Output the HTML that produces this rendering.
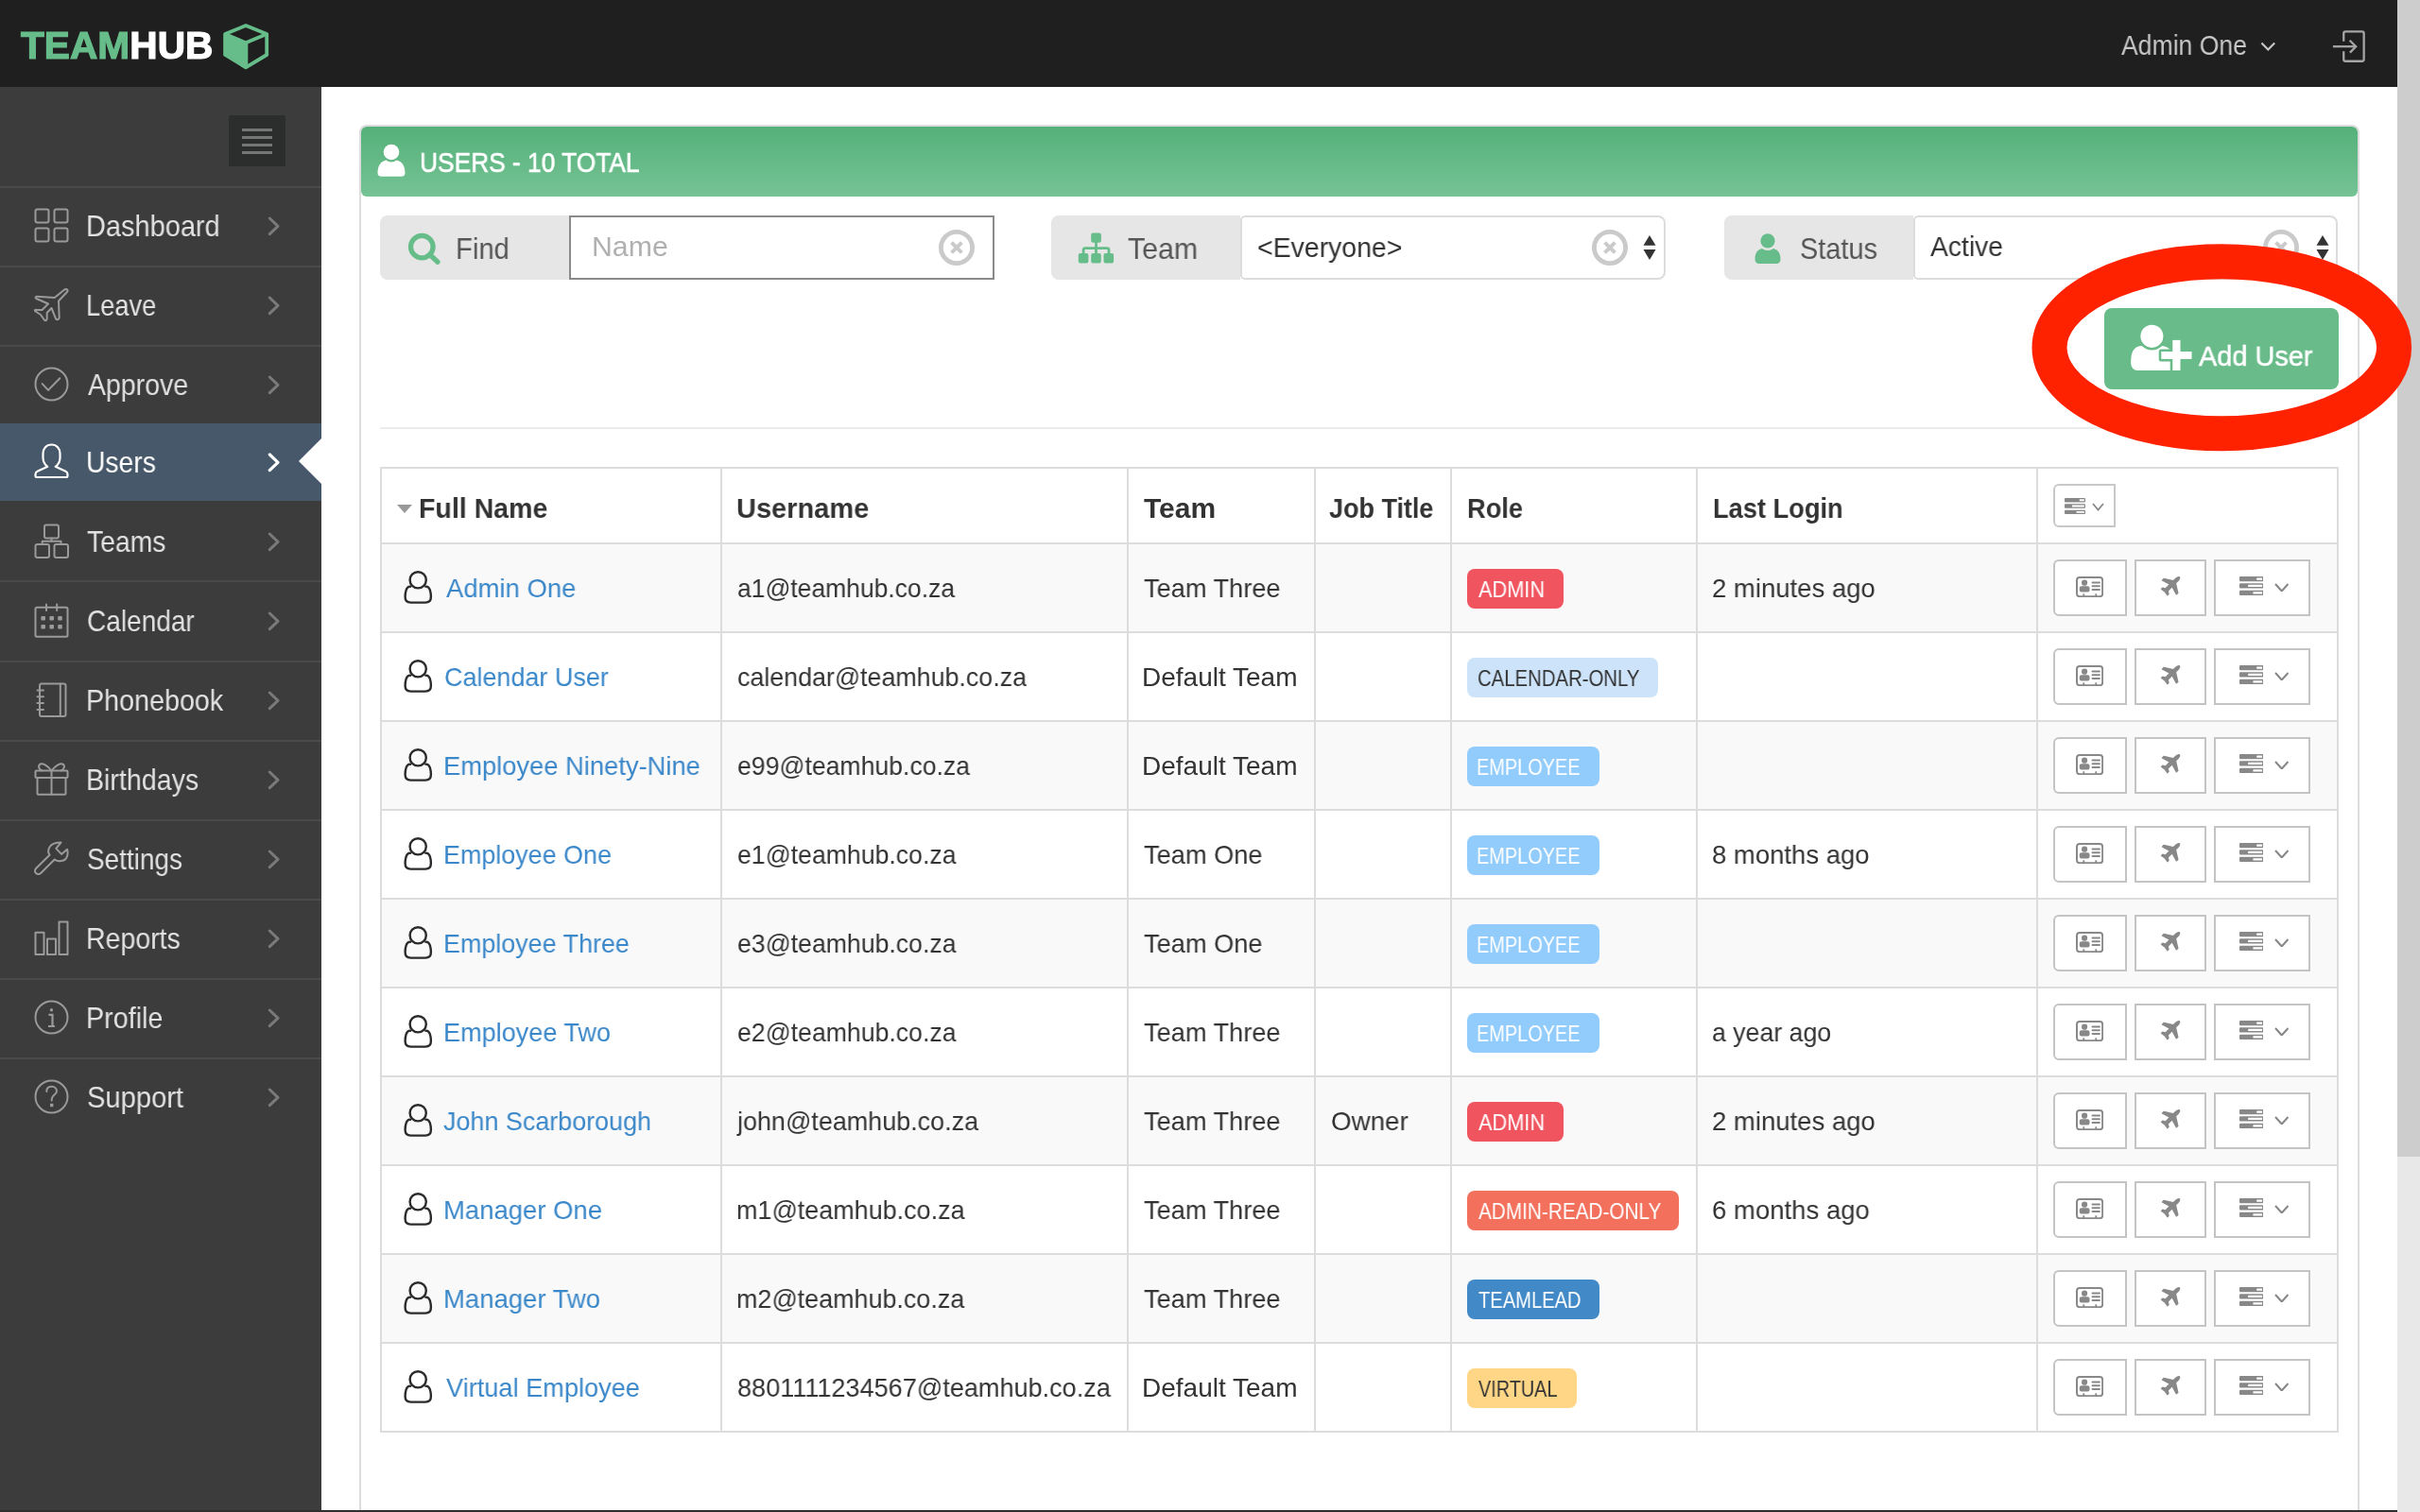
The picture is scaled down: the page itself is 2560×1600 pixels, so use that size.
<!DOCTYPE html><html><head><meta charset='utf-8'><style>
*{box-sizing:border-box;margin:0;padding:0}
html,body{width:2560px;height:1600px;overflow:hidden;background:#fff;font-family:"Liberation Sans", sans-serif;}
.a{position:absolute}
.t{position:absolute;white-space:pre;line-height:1;will-change:transform}
</style></head><body><div class="a" style="left:0;top:0;width:2536px;height:92px;background:#1f1f1f"></div>
<div class="t" style="left:22px;top:27.6px;font-size:40px;font-weight:700;color:#67bd8a;letter-spacing:0px;transform-origin:0 0;transform:scaleX(1.017);-webkit-text-stroke:1.2px #67bd8a">TEAM<span style="color:#fff;-webkit-text-stroke:1.2px #fff">HUB</span></div>
<svg style="position:absolute;left:230px;top:20px" width="60" height="58" viewBox="0 0 60 58" ><polygon points="8.1,16 30,25.3 30,51.3 8.1,38" fill="#67bd8a"/><polygon points="30,7.1 52.2,16 52.2,38 30,51.3 8.1,38 8.1,16" fill="none" stroke="#67bd8a" stroke-width="3.8" stroke-linejoin="round"/><polyline points="8.1,16 30,25.3 52.2,16" fill="none" stroke="#67bd8a" stroke-width="3.8" stroke-linejoin="round"/><line x1="30.4" y1="25.3" x2="30.4" y2="51.3" stroke="#67bd8a" stroke-width="3.8"/></svg>
<div class="t" style="left:2244.00px;top:34.45px;font-size:29px;color:#c8c8c8;font-weight:400;transform:scaleX(0.9165);transform-origin:0 0;">Admin One</div>
<svg style="position:absolute;left:2391px;top:44px" width="17" height="11" viewBox="0 0 17 11" ><polyline points="1.4,1.5 8.3,8.6 15.2,1.5" fill="none" stroke="#c8c8c8" stroke-width="2.1"/></svg>
<svg style="position:absolute;left:2466px;top:30px" width="38" height="38" viewBox="0 0 38 38" ><path d="M13.25,13.8 V5.45 a2,2 0 0 1 2,-2 H32.65 a2,2 0 0 1 2,2 V32.75 a2,2 0 0 1 -2,2 H15.25 a2,2 0 0 1 -2,-2 V24.3" fill="none" stroke="#a6a6a6" stroke-width="2.3"/><line x1="1.9" y1="19.2" x2="26" y2="19.2" stroke="#a6a6a6" stroke-width="2.3"/><polyline points="19.6,12.7 26.2,19.2 19.9,25.6" fill="none" stroke="#a6a6a6" stroke-width="2.3"/></svg>
<div class="a" style="left:2536px;top:0;width:24px;height:1600px;background:#e8e8e8"></div>
<div class="a" style="left:2536px;top:0;width:24px;height:1224px;background:#cdcdcd"></div>
<div class="a" style="left:0;top:92px;width:340px;height:1508px;background:#3c3c3c"></div>
<div class="a" style="left:242px;top:122px;width:60px;height:54px;background:#2c2d2d"></div>
<div class="a" style="left:256px;top:136px;width:32px;height:2.6px;background:#767676"></div>
<div class="a" style="left:256px;top:144px;width:32px;height:2.6px;background:#767676"></div>
<div class="a" style="left:256px;top:152px;width:32px;height:2.6px;background:#767676"></div>
<div class="a" style="left:256px;top:160px;width:32px;height:2.6px;background:#767676"></div>
<div class="a" style="left:0;top:197px;width:340px;height:2px;background:#494949"></div>
<div class="a" style="left:0;top:281px;width:340px;height:2px;background:#494949"></div>
<div class="a" style="left:0;top:365px;width:340px;height:2px;background:#494949"></div>
<div class="a" style="left:0;top:614px;width:340px;height:2px;background:#494949"></div>
<div class="a" style="left:0;top:699px;width:340px;height:2px;background:#494949"></div>
<div class="a" style="left:0;top:783px;width:340px;height:2px;background:#494949"></div>
<div class="a" style="left:0;top:867px;width:340px;height:2px;background:#494949"></div>
<div class="a" style="left:0;top:951px;width:340px;height:2px;background:#494949"></div>
<div class="a" style="left:0;top:1035px;width:340px;height:2px;background:#494949"></div>
<div class="a" style="left:0;top:1119px;width:340px;height:2px;background:#494949"></div>
<div class="a" style="left:0;top:448px;width:340px;height:82px;background:#465869"></div>
<svg style="position:absolute;left:316px;top:464px" width="24" height="48" viewBox="0 0 24 48" ><polygon points="0,24 24,0 24,48" fill="#fff"/></svg>
<svg style="position:absolute;left:36px;top:220px" width="37" height="37" viewBox="-0.5 -0.5 37 37" ><g fill="none" stroke="#9a9a9a" stroke-width="2" stroke-linejoin="round" stroke-linecap="round"><rect x="1" y="1" width="14" height="14" rx="2"/><rect x="21" y="1" width="14" height="14" rx="2"/><rect x="1" y="21" width="14" height="14" rx="2"/><rect x="21" y="21" width="14" height="14" rx="2"/></g></svg>
<div class="t" style="left:90.68px;top:224.18px;font-size:30.5px;color:#e2e2e2;font-weight:400;transform:scaleX(0.9493);transform-origin:0 0;">Dashboard</div>
<svg style="position:absolute;left:283px;top:229px" width="14" height="21" viewBox="0 0 14 21" ><polyline points="2.3,2 11,10.3 2.3,18.6" fill="none" stroke="#7a7a7a" stroke-width="3" stroke-linecap="round" stroke-linejoin="round"/></svg>
<svg style="position:absolute;left:36px;top:304px" width="37" height="37" viewBox="-0.5 -0.5 37 37" ><path fill="none" stroke="#9a9a9a" stroke-width="2" stroke-linejoin="round" stroke-linecap="round" d="M32,1.8 C34.5,0.8 36,2.8 34.2,4.8 L25.5,14 L26.2,31.5 C26.2,33 24.2,34.5 22.8,33.3 L18,21.5 L13.2,26.5 L13.2,32.8 C13.2,34.5 11.5,35.2 10.5,34.2 L6.5,28.5 L1,25 C0,24 0.6,23 1.6,23.2 L8,23.5 L14.5,17 L2,11.5 C0.6,10.8 1,9.3 2.5,9.3 L21.2,10.5 Z"/></svg>
<div class="t" style="left:90.82px;top:308.18px;font-size:30.5px;color:#e2e2e2;font-weight:400;transform:scaleX(0.8924);transform-origin:0 0;">Leave</div>
<svg style="position:absolute;left:283px;top:313px" width="14" height="21" viewBox="0 0 14 21" ><polyline points="2.3,2 11,10.3 2.3,18.6" fill="none" stroke="#7a7a7a" stroke-width="3" stroke-linecap="round" stroke-linejoin="round"/></svg>
<svg style="position:absolute;left:36px;top:388px" width="37" height="37" viewBox="-0.5 -0.5 37 37" ><g fill="none" stroke="#9a9a9a" stroke-width="2" stroke-linejoin="round" stroke-linecap="round"><circle cx="18" cy="18" r="17"/><polyline points="8.2,17.6 14.5,24.4 26.8,11.8"/></g></svg>
<div class="t" style="left:93.00px;top:392.18px;font-size:30.5px;color:#e2e2e2;font-weight:400;transform:scaleX(0.9334);transform-origin:0 0;">Approve</div>
<svg style="position:absolute;left:283px;top:397px" width="14" height="21" viewBox="0 0 14 21" ><polyline points="2.3,2 11,10.3 2.3,18.6" fill="none" stroke="#7a7a7a" stroke-width="3" stroke-linecap="round" stroke-linejoin="round"/></svg>
<svg style="position:absolute;left:36px;top:469px" width="37" height="37" viewBox="-0.5 -0.5 37 37" ><path fill="none" stroke="#fff" stroke-width="2.2" stroke-linejoin="round" d="M18,1 C12.5,1 9,5 9,10.5 L9,15 C9,19 10.8,22 13.8,24.3 L3,29.3 C1.5,30 1,31 1,32.5 L1,34 C1,35 1.6,35.6 2.6,35.6 L33.4,35.6 C34.4,35.6 35,35 35,34 L35,32.5 C35,31 34.5,30 33,29.3 L22.2,24.3 C25.2,22 27,19 27,15 L27,10.5 C27,5 23.5,1 18,1 Z"/></svg>
<div class="t" style="left:91.02px;top:474.18px;font-size:30.5px;color:#ffffff;font-weight:400;transform:scaleX(0.9269);transform-origin:0 0;">Users</div>
<svg style="position:absolute;left:283px;top:479px" width="14" height="21" viewBox="0 0 14 21" ><polyline points="2.3,2 11,10.3 2.3,18.6" fill="none" stroke="#ffffff" stroke-width="3.2" stroke-linecap="round" stroke-linejoin="round"/></svg>
<svg style="position:absolute;left:36px;top:554px" width="37" height="37" viewBox="-0.5 -0.5 37 37" ><g fill="none" stroke="#9a9a9a" stroke-width="2" stroke-linejoin="round" stroke-linecap="round"><rect x="10.5" y="1" width="15" height="14" rx="2"/><rect x="1" y="21.5" width="14.5" height="14" rx="2"/><rect x="21" y="21.5" width="14.5" height="14" rx="2"/><polyline points="8.2,21.5 8.2,18.3 28,18.3 28,21.5"/><line x1="18" y1="15" x2="18" y2="18.3"/></g></svg>
<div class="t" style="left:92.43px;top:558.18px;font-size:30.5px;color:#e2e2e2;font-weight:400;transform:scaleX(0.9286);transform-origin:0 0;">Teams</div>
<svg style="position:absolute;left:283px;top:563px" width="14" height="21" viewBox="0 0 14 21" ><polyline points="2.3,2 11,10.3 2.3,18.6" fill="none" stroke="#7a7a7a" stroke-width="3" stroke-linecap="round" stroke-linejoin="round"/></svg>
<svg style="position:absolute;left:36px;top:638px" width="37" height="37" viewBox="-0.5 -0.5 37 37" ><g fill="none" stroke="#9a9a9a" stroke-width="2" stroke-linejoin="round" stroke-linecap="round"><rect x="1" y="4.3" width="34" height="31" rx="1.5"/><line x1="12.5" y1="1" x2="12.5" y2="7.5"/><line x1="23.7" y1="1" x2="23.7" y2="7.5"/></g><rect x="6.8999999999999995" y="13.399999999999999" width="4.6" height="4.6" rx="1" fill="#9a9a9a"/><rect x="6.8999999999999995" y="22.4" width="4.6" height="4.6" rx="1" fill="#9a9a9a"/><rect x="15.899999999999999" y="13.399999999999999" width="4.6" height="4.6" rx="1" fill="#9a9a9a"/><rect x="15.899999999999999" y="22.4" width="4.6" height="4.6" rx="1" fill="#9a9a9a"/><rect x="24.7" y="13.399999999999999" width="4.6" height="4.6" rx="1" fill="#9a9a9a"/><rect x="24.7" y="22.4" width="4.6" height="4.6" rx="1" fill="#9a9a9a"/></svg>
<div class="t" style="left:91.60px;top:642.18px;font-size:30.5px;color:#e2e2e2;font-weight:400;transform:scaleX(0.9192);transform-origin:0 0;">Calendar</div>
<svg style="position:absolute;left:283px;top:647px" width="14" height="21" viewBox="0 0 14 21" ><polyline points="2.3,2 11,10.3 2.3,18.6" fill="none" stroke="#7a7a7a" stroke-width="3" stroke-linecap="round" stroke-linejoin="round"/></svg>
<svg style="position:absolute;left:36px;top:722px" width="37" height="37" viewBox="-0.5 -0.5 37 37" ><g fill="none" stroke="#9a9a9a" stroke-width="2" stroke-linejoin="round" stroke-linecap="round"><rect x="5.5" y="1" width="27.5" height="34.5" rx="2"/><line x1="27.3" y1="1" x2="27.3" y2="35.5"/><line x1="3" y1="8" x2="9.5" y2="8"/><line x1="3" y1="14.8" x2="9.5" y2="14.8"/><line x1="3" y1="21.5" x2="9.5" y2="21.5"/><line x1="3" y1="28.4" x2="9.5" y2="28.4"/></g></svg>
<div class="t" style="left:90.70px;top:726.18px;font-size:30.5px;color:#e2e2e2;font-weight:400;transform:scaleX(0.9409);transform-origin:0 0;">Phonebook</div>
<svg style="position:absolute;left:283px;top:731px" width="14" height="21" viewBox="0 0 14 21" ><polyline points="2.3,2 11,10.3 2.3,18.6" fill="none" stroke="#7a7a7a" stroke-width="3" stroke-linecap="round" stroke-linejoin="round"/></svg>
<svg style="position:absolute;left:36px;top:806px" width="37" height="37" viewBox="-0.5 -0.5 37 37" ><g fill="none" stroke="#9a9a9a" stroke-width="2" stroke-linejoin="round" stroke-linecap="round"><rect x="1" y="9" width="34" height="7.5" rx="1"/><rect x="3" y="16.5" width="30" height="17.8" rx="1"/><line x1="18" y1="9" x2="18" y2="34.3"/><path d="M18,9 C14,4 8,0 5.5,2.5 C3.5,4.5 5,8 8,9"/><path d="M18,9 C22,4 28,0 30.5,2.5 C32.5,4.5 31,8 28,9"/></g></svg>
<div class="t" style="left:90.71px;top:810.18px;font-size:30.5px;color:#e2e2e2;font-weight:400;transform:scaleX(0.9371);transform-origin:0 0;">Birthdays</div>
<svg style="position:absolute;left:283px;top:815px" width="14" height="21" viewBox="0 0 14 21" ><polyline points="2.3,2 11,10.3 2.3,18.6" fill="none" stroke="#7a7a7a" stroke-width="3" stroke-linecap="round" stroke-linejoin="round"/></svg>
<svg style="position:absolute;left:36px;top:890px" width="37" height="37" viewBox="-0.5 -0.5 37 37" ><path fill="none" stroke="#9a9a9a" stroke-width="2" stroke-linejoin="round" stroke-linecap="round" d="M16,14.2 C14.4,12 14.4,8.3 16.2,5.5 C18.2,2.5 22.5,1 28,1 L22.8,7.4 L28.6,13.4 L34.5,8.2 C35.2,10.2 35.2,13 34.7,15 C33.9,18.2 31.5,20.2 28.3,20.6 C25.8,21 23,20.5 21.2,19 L6.9,33.2 C5.2,34.9 2.9,34.9 1.5,33.5 C0.1,32.1 0.1,29.9 1.8,28.2 Z"/></svg>
<div class="t" style="left:91.88px;top:894.18px;font-size:30.5px;color:#e2e2e2;font-weight:400;transform:scaleX(0.9161);transform-origin:0 0;">Settings</div>
<svg style="position:absolute;left:283px;top:899px" width="14" height="21" viewBox="0 0 14 21" ><polyline points="2.3,2 11,10.3 2.3,18.6" fill="none" stroke="#7a7a7a" stroke-width="3" stroke-linecap="round" stroke-linejoin="round"/></svg>
<svg style="position:absolute;left:36px;top:974px" width="37" height="37" viewBox="-0.5 -0.5 37 37" ><g fill="none" stroke="#9a9a9a" stroke-width="2" stroke-linejoin="round" stroke-linecap="round"><rect x="1" y="12.3" width="9" height="23.3"/><rect x="13.5" y="19" width="9" height="16.6"/><rect x="26" y="1" width="9" height="34.6"/></g></svg>
<div class="t" style="left:90.72px;top:978.18px;font-size:30.5px;color:#e2e2e2;font-weight:400;transform:scaleX(0.9348);transform-origin:0 0;">Reports</div>
<svg style="position:absolute;left:283px;top:983px" width="14" height="21" viewBox="0 0 14 21" ><polyline points="2.3,2 11,10.3 2.3,18.6" fill="none" stroke="#7a7a7a" stroke-width="3" stroke-linecap="round" stroke-linejoin="round"/></svg>
<svg style="position:absolute;left:36px;top:1058px" width="37" height="37" viewBox="-0.5 -0.5 37 37" ><g fill="none" stroke="#9a9a9a" stroke-width="2" stroke-linejoin="round" stroke-linecap="round"><circle cx="18" cy="18" r="17"/></g><circle cx="18" cy="10.3" r="1.7" fill="#9a9a9a"/><path d="M15,15.3 H19 V27.3 M14.5,27.5 H21.5" fill="none" stroke="#9a9a9a" stroke-width="2.2"/></svg>
<div class="t" style="left:90.70px;top:1062.18px;font-size:30.5px;color:#e2e2e2;font-weight:400;transform:scaleX(0.9408);transform-origin:0 0;">Profile</div>
<svg style="position:absolute;left:283px;top:1067px" width="14" height="21" viewBox="0 0 14 21" ><polyline points="2.3,2 11,10.3 2.3,18.6" fill="none" stroke="#7a7a7a" stroke-width="3" stroke-linecap="round" stroke-linejoin="round"/></svg>
<svg style="position:absolute;left:36px;top:1142px" width="37" height="37" viewBox="-0.5 -0.5 37 37" ><g fill="none" stroke="#9a9a9a" stroke-width="2" stroke-linejoin="round" stroke-linecap="round"><circle cx="18" cy="18" r="17"/><path d="M12.8,12.5 C12.8,9 15.2,7.3 18.2,7.3 C21.3,7.3 23.5,9.3 23.5,12.2 C23.5,15.8 18.2,16.5 18.2,20.5 L18.2,22"/></g><rect x="16.5" y="25.3" width="3.4" height="3.4" fill="#9a9a9a"/></svg>
<div class="t" style="left:91.83px;top:1146.18px;font-size:30.5px;color:#e2e2e2;font-weight:400;transform:scaleX(0.9558);transform-origin:0 0;">Support</div>
<svg style="position:absolute;left:283px;top:1151px" width="14" height="21" viewBox="0 0 14 21" ><polyline points="2.3,2 11,10.3 2.3,18.6" fill="none" stroke="#7a7a7a" stroke-width="3" stroke-linecap="round" stroke-linejoin="round"/></svg>
<div class="a" style="left:380px;top:132px;width:2116px;height:1500px;border:2px solid #dcdcdc;border-radius:8px 8px 0 0;background:#fff"></div>
<div class="a" style="left:382px;top:134px;width:2112px;height:74px;border-radius:6px;background:linear-gradient(#54b179,#76c395)"></div>
<svg style="position:absolute;left:399px;top:152px" width="30" height="36" viewBox="0 0 30 36" ><circle cx="15" cy="9" r="8.3" fill="#fff"/><path d="M0.5,31 C0.5,22 5,18.5 9.5,17.5 C11,18.8 13,19.5 15,19.5 C17,19.5 19,18.8 20.5,17.5 C25,18.5 29.5,22 29.5,31 C29.5,33.5 28,34.8 25.5,34.8 L4.5,34.8 C2,34.8 0.5,33.5 0.5,31 Z" fill="#fff"/></svg>
<div class="t" style="left:444.46px;top:157.32px;font-size:29.5px;color:#fff;font-weight:400;transform:scaleX(0.8921);transform-origin:0 0;-webkit-text-stroke:0.6px #fff">USERS - 10 TOTAL</div>
<div class="a" style="left:402px;top:228px;width:200px;height:68px;background:#e6e6e6;border-radius:8px 0 0 8px"></div>
<div class="a" style="left:1112px;top:228px;width:200px;height:68px;background:#e6e6e6;border-radius:8px 0 0 8px"></div>
<div class="a" style="left:1824px;top:228px;width:200px;height:68px;background:#e6e6e6;border-radius:8px 0 0 8px"></div>
<div class="a" style="left:602px;top:228px;width:450px;height:68px;border:2px solid #8a8a8a;background:#fff"></div>
<div class="a" style="left:1312px;top:228px;width:450px;height:68px;border:2px solid #dcdcdc;border-radius:5px 8px 8px 5px;background:#fff"></div>
<div class="a" style="left:2024px;top:228px;width:449px;height:68px;border:2px solid #dcdcdc;border-radius:5px 8px 8px 5px;background:#fff"></div>
<svg style="position:absolute;left:430px;top:245px" width="40" height="40" viewBox="0 0 40 40" ><circle cx="16.3" cy="16.1" r="11.8" fill="none" stroke="#67bd8a" stroke-width="5.3"/><line x1="24.5" y1="24.3" x2="33" y2="32.2" stroke="#67bd8a" stroke-width="5.3" stroke-linecap="round"/></svg>
<div class="t" style="left:482.36px;top:248.18px;font-size:30.5px;color:#555;font-weight:400;transform:scaleX(0.9587);transform-origin:0 0;">Find</div>
<div class="t" style="left:626.38px;top:247.45px;font-size:29px;color:#b0b0b0;font-weight:400;transform:scaleX(1.0434);transform-origin:0 0;">Name</div>
<svg style="position:absolute;left:992px;top:242px" width="40" height="40" viewBox="0 0 40 40" ><circle cx="20" cy="20" r="16.6" fill="none" stroke="#cacaca" stroke-width="4.8"/><path d="M14.6,14.6 L25.4,25.4 M25.4,14.6 L14.6,25.4" stroke="#cacaca" stroke-width="4" stroke-linecap="butt"/></svg>
<svg style="position:absolute;left:1140px;top:246px" width="40" height="34" viewBox="0 0 40 34" ><rect x="14.2" y="0.6" width="10.7" height="10.2" rx="2" fill="#67bd8a"/><rect x="0.8" y="22" width="10.6" height="10.6" rx="2" fill="#67bd8a"/><rect x="14.2" y="22" width="10.6" height="10.6" rx="2" fill="#67bd8a"/><rect x="27.5" y="22" width="10.6" height="10.6" rx="2" fill="#67bd8a"/><path d="M19.5,10 V22.5 M6.1,22.5 V18.6 Q6.1,16.6 8.1,16.6 H31 Q33,16.6 33,18.6 V22.5" fill="none" stroke="#67bd8a" stroke-width="2.8"/></svg>
<div class="t" style="left:1193.39px;top:248.18px;font-size:30.5px;color:#555;font-weight:400;transform:scaleX(0.9924);transform-origin:0 0;">Team</div>
<div class="t" style="left:1330.26px;top:247.65px;font-size:29px;color:#333;font-weight:400;transform:scaleX(0.9808);transform-origin:0 0;">&lt;Everyone&gt;</div>
<svg style="position:absolute;left:1683px;top:242px" width="40" height="40" viewBox="0 0 40 40" ><circle cx="20" cy="20" r="16.6" fill="none" stroke="#cacaca" stroke-width="4.8"/><path d="M14.6,14.6 L25.4,25.4 M25.4,14.6 L14.6,25.4" stroke="#cacaca" stroke-width="4" stroke-linecap="butt"/></svg>
<svg style="position:absolute;left:1737px;top:249px" width="16" height="27" viewBox="0 0 16 27" ><polygon points="8,0 14.5,10.7 1.5,10.7" fill="#333"/><polygon points="1.5,14.9 14.5,14.9 8,26" fill="#333"/></svg>
<svg style="position:absolute;left:1856px;top:247px" width="29" height="33" viewBox="0 0 29 33" ><circle cx="14" cy="7.8" r="7.6" fill="#67bd8a"/><path d="M0.5,27 C0.5,20 4,17 8,16 C9.5,17.2 11.5,18 14,18 C16.5,18 18.5,17.2 20,16 C24,17 27.5,20 27.5,27 C27.5,30.3 26,32 23,32 L5,32 C2,32 0.5,30.3 0.5,27 Z" fill="#67bd8a"/></svg>
<div class="t" style="left:1903.84px;top:248.18px;font-size:30.5px;color:#555;font-weight:400;transform:scaleX(0.9486);transform-origin:0 0;">Status</div>
<div class="t" style="left:2041.80px;top:247.45px;font-size:29px;color:#333;font-weight:400;transform:scaleX(0.9753);transform-origin:0 0;">Active</div>
<svg style="position:absolute;left:2393px;top:242px" width="40" height="40" viewBox="0 0 40 40" ><circle cx="20" cy="20" r="16.6" fill="none" stroke="#cacaca" stroke-width="4.8"/><path d="M14.6,14.6 L25.4,25.4 M25.4,14.6 L14.6,25.4" stroke="#cacaca" stroke-width="4" stroke-linecap="butt"/></svg>
<svg style="position:absolute;left:2449px;top:249px" width="16" height="27" viewBox="0 0 16 27" ><polygon points="8,0 14.5,10.7 1.5,10.7" fill="#333"/><polygon points="1.5,14.9 14.5,14.9 8,26" fill="#333"/></svg>
<div class="a" style="left:2226px;top:326px;width:248px;height:86px;background:#69bc8a;border-radius:8px"></div>
<svg style="position:absolute;left:2245px;top:335px" width="80" height="65" viewBox="0 0 80 65" ><path d="M9.2,47 C9.2,37 13,31 21,31 L40,31 C47,31 52,34 52,40 L52,57 L16.5,57 C12,57 9.2,53.5 9.2,49 Z" fill="#fff"/><circle cx="31.4" cy="20.85" r="14.6" fill="#69bc8a"/><circle cx="31.4" cy="20.85" r="12.05" fill="#fff"/><rect x="50.7" y="22.3" width="13.4" height="40" rx="2.6" fill="#69bc8a"/><rect x="38.7" y="34.4" width="37.4" height="13.1" rx="2.6" fill="#69bc8a"/><rect x="53.3" y="24.9" width="8.2" height="32.1" fill="#fff"/><rect x="41.3" y="37" width="32.2" height="7.9" fill="#fff"/></svg>
<div class="t" style="left:2325.70px;top:362.10px;font-size:30px;color:#fff;font-weight:400;transform:scaleX(0.9626);transform-origin:0 0;-webkit-text-stroke:0.5px #fff">Add User</div>
<div class="a" style="left:402px;top:452px;width:2071px;height:2px;background:#ececec"></div>
<div class="a" style="left:402px;top:574px;width:2070px;height:94px;background:#f9f9f9"></div>
<div class="a" style="left:402px;top:762px;width:2070px;height:94px;background:#f9f9f9"></div>
<div class="a" style="left:402px;top:950px;width:2070px;height:94px;background:#f9f9f9"></div>
<div class="a" style="left:402px;top:1138px;width:2070px;height:94px;background:#f9f9f9"></div>
<div class="a" style="left:402px;top:1326px;width:2070px;height:94px;background:#f9f9f9"></div>
<div class="a" style="left:402px;top:494px;width:2072px;height:2px;background:#dcdcdc"></div>
<div class="a" style="left:402px;top:574px;width:2072px;height:2px;background:#dcdcdc"></div>
<div class="a" style="left:402px;top:668px;width:2072px;height:2px;background:#dcdcdc"></div>
<div class="a" style="left:402px;top:762px;width:2072px;height:2px;background:#dcdcdc"></div>
<div class="a" style="left:402px;top:856px;width:2072px;height:2px;background:#dcdcdc"></div>
<div class="a" style="left:402px;top:950px;width:2072px;height:2px;background:#dcdcdc"></div>
<div class="a" style="left:402px;top:1044px;width:2072px;height:2px;background:#dcdcdc"></div>
<div class="a" style="left:402px;top:1138px;width:2072px;height:2px;background:#dcdcdc"></div>
<div class="a" style="left:402px;top:1232px;width:2072px;height:2px;background:#dcdcdc"></div>
<div class="a" style="left:402px;top:1326px;width:2072px;height:2px;background:#dcdcdc"></div>
<div class="a" style="left:402px;top:1420px;width:2072px;height:2px;background:#dcdcdc"></div>
<div class="a" style="left:402px;top:1514px;width:2072px;height:2px;background:#dcdcdc"></div>
<div class="a" style="left:402px;top:494px;width:2px;height:1022px;background:#dcdcdc"></div>
<div class="a" style="left:762px;top:494px;width:2px;height:1022px;background:#dcdcdc"></div>
<div class="a" style="left:1192px;top:494px;width:2px;height:1022px;background:#dcdcdc"></div>
<div class="a" style="left:1390px;top:494px;width:2px;height:1022px;background:#dcdcdc"></div>
<div class="a" style="left:1534px;top:494px;width:2px;height:1022px;background:#dcdcdc"></div>
<div class="a" style="left:1794px;top:494px;width:2px;height:1022px;background:#dcdcdc"></div>
<div class="a" style="left:2154px;top:494px;width:2px;height:1022px;background:#dcdcdc"></div>
<div class="a" style="left:2472px;top:494px;width:2px;height:1022px;background:#dcdcdc"></div>
<svg style="position:absolute;left:419px;top:533px" width="18" height="11" viewBox="0 0 18 11" ><polygon points="1,1 17,1 9,10" fill="#999"/></svg>
<div class="t" style="left:443.19px;top:523.00px;font-size:30px;color:#333;font-weight:700;transform:scaleX(0.9504);transform-origin:0 0;">Full Name</div>
<div class="t" style="left:779.06px;top:523.00px;font-size:30px;color:#333;font-weight:700;transform:scaleX(0.9664);transform-origin:0 0;">Username</div>
<div class="t" style="left:1209.70px;top:523.00px;font-size:30px;color:#333;font-weight:700;transform:scaleX(0.9950);transform-origin:0 0;">Team</div>
<div class="t" style="left:1406.33px;top:523.00px;font-size:30px;color:#333;font-weight:700;transform:scaleX(0.8988);transform-origin:0 0;">Job Title</div>
<div class="t" style="left:1551.67px;top:523.00px;font-size:30px;color:#333;font-weight:700;transform:scaleX(0.9083);transform-origin:0 0;">Role</div>
<div class="t" style="left:1811.57px;top:523.00px;font-size:30px;color:#333;font-weight:700;transform:scaleX(0.9079);transform-origin:0 0;">Last Login</div>
<div class="a" style="left:2172px;top:512px;width:66px;height:46px;border:2px solid #c8c8c8;border-radius:6px 0 0 6px;background:#fff"></div>
<svg style="position:absolute;left:2184px;top:526.8px" width="22" height="17.1" viewBox="0 0 22 17.1" ><rect x="0" y="0.00" width="22" height="4.47" rx="1" fill="#888"/><rect x="15.76" y="1.30" width="5.11" height="1.88" rx="0.5" fill="#fff"/><rect x="0" y="6.32" width="22" height="4.47" rx="1" fill="#888"/><rect x="7.88" y="7.61" width="12.99" height="1.88" rx="0.5" fill="#fff"/><rect x="0" y="12.63" width="22" height="4.47" rx="1" fill="#888"/><rect x="12.47" y="13.93" width="8.40" height="1.88" rx="0.5" fill="#fff"/></svg>
<svg style="position:absolute;left:2213.2px;top:532.4px" width="13" height="8.6" viewBox="0 0 13 8.6" ><polyline points="1,1 6.5,7.6 12,1" fill="none" stroke="#888" stroke-width="1.8"/></svg>
<svg style="position:absolute;left:420px;top:600px" width="45" height="45" viewBox="0 0 45 45" ><g fill="none" stroke="#2b2b2b" stroke-width="2.4"><circle cx="22.2" cy="13.8" r="8.6"/><path d="M15.2,20.8 C12.5,20.2 10.5,21.5 9.6,24.5 C9,26.5 8.6,29 8.6,31.5 C8.6,35.5 10.6,37.6 14.5,37.6 L30,37.6 C33.9,37.6 35.9,35.5 35.9,31.5 C35.9,29 35.5,26.5 34.9,24.5 C34,21.5 32,20.2 29.3,20.8"/></g></svg>
<div class="t" style="left:471.50px;top:608.59px;font-size:28px;color:#3a87c9;font-weight:400;transform:scaleX(0.9802);transform-origin:0 0;">Admin One</div>
<div class="t" style="left:779.74px;top:608.59px;font-size:28px;color:#333;font-weight:400;transform:scaleX(0.9454);transform-origin:0 0;">a1@teamhub.co.za</div>
<div class="t" style="left:1209.96px;top:608.59px;font-size:28px;color:#333;font-weight:400;transform:scaleX(0.9708);transform-origin:0 0;">Team Three</div>
<div class="a" style="left:1552px;top:602px;width:102px;height:42px;background:#f0545f;border-radius:8px"></div>
<div class="t" style="left:1564.00px;top:612.53px;font-size:23px;color:#fff;font-weight:400;transform:scaleX(0.9469);transform-origin:0 0;">ADMIN</div>
<div class="t" style="left:1810.92px;top:608.59px;font-size:28px;color:#333;font-weight:400;transform:scaleX(0.9823);transform-origin:0 0;">2 minutes ago</div>
<div class="a" style="left:2172px;top:592px;width:78px;height:60px;border:2px solid #c4c4c4;border-radius:6px 0 0 6px;background:#fff"></div>
<div class="a" style="left:2258px;top:592px;width:76px;height:60px;border:2px solid #c4c4c4;background:#fff"></div>
<div class="a" style="left:2342px;top:592px;width:102px;height:60px;border:2px solid #c4c4c4;background:#fff"></div>
<svg style="position:absolute;left:2195.9px;top:609.5px" width="29.2" height="22.2" viewBox="0 0 29.2 22.2" ><rect x="1" y="1" width="27.2" height="20.2" rx="3" fill="none" stroke="#888" stroke-width="2"/><circle cx="9.1" cy="6.7" r="3.1" fill="#888"/><rect x="3.8" y="10.2" width="10.7" height="6.2" rx="2" fill="#888"/><rect x="16.5" y="5.5" width="9.4" height="2" rx="1" fill="#888"/><rect x="16.5" y="9.2" width="9.4" height="2" rx="1" fill="#888"/><rect x="16.5" y="12.9" width="9.4" height="2" rx="1" fill="#888"/><rect x="7.4" y="18.3" width="1.8" height="3" fill="#888"/><rect x="20.4" y="18.3" width="1.8" height="3" fill="#888"/></svg>
<svg style="position:absolute;left:2283.05px;top:607.54px" width="26.2" height="26.2" viewBox="0 0 1792 1792" ><path fill="#888" d="M1568 160q44 52 12 148t-108 172l-161 161 160 696q5 19-12 33l-128 96q-7 6-19 6-4 0-7-1-15-3-21-16l-279-508-259 259 53 194q5 17-8 31l-96 96q-9 9-23 9h-2q-15-2-24-13l-189-252-252-189q-11-7-13-23-1-13 9-25l96-97q9-9 23-9 6 0 8 1l194 53 259-259-508-279q-14-8-17-24-2-16 9-27l128-128q14-13 30-8l665 159 160-160q76-76 172-108t148 12z"/></svg>
<svg style="position:absolute;left:2368.7px;top:609.7px" width="25.4" height="19.9" viewBox="0 0 25.4 19.9" ><rect x="0" y="0.00" width="25.4" height="5.20" rx="1" fill="#888"/><rect x="18.20" y="1.51" width="5.90" height="2.18" rx="0.5" fill="#fff"/><rect x="0" y="7.35" width="25.4" height="5.20" rx="1" fill="#888"/><rect x="9.10" y="8.86" width="15.00" height="2.18" rx="0.5" fill="#fff"/><rect x="0" y="14.70" width="25.4" height="5.20" rx="1" fill="#888"/><rect x="14.40" y="16.21" width="9.70" height="2.18" rx="0.5" fill="#fff"/></svg>
<svg style="position:absolute;left:2405.5px;top:616.5px" width="15.5" height="9.5" viewBox="0 0 15.5 9.5" ><polyline points="1,1 7.75,8.5 14.5,1" fill="none" stroke="#888" stroke-width="2.1"/></svg>
<svg style="position:absolute;left:420px;top:694px" width="45" height="45" viewBox="0 0 45 45" ><g fill="none" stroke="#2b2b2b" stroke-width="2.4"><circle cx="22.2" cy="13.8" r="8.6"/><path d="M15.2,20.8 C12.5,20.2 10.5,21.5 9.6,24.5 C9,26.5 8.6,29 8.6,31.5 C8.6,35.5 10.6,37.6 14.5,37.6 L30,37.6 C33.9,37.6 35.9,35.5 35.9,31.5 C35.9,29 35.5,26.5 34.9,24.5 C34,21.5 32,20.2 29.3,20.8"/></g></svg>
<div class="t" style="left:470.15px;top:702.59px;font-size:28px;color:#3a87c9;font-weight:400;transform:scaleX(0.9622);transform-origin:0 0;">Calendar User</div>
<div class="t" style="left:779.73px;top:702.59px;font-size:28px;color:#333;font-weight:400;transform:scaleX(0.9577);transform-origin:0 0;">calendar@teamhub.co.za</div>
<div class="t" style="left:1208.26px;top:702.59px;font-size:28px;color:#333;font-weight:400;">Default Team</div>
<div class="a" style="left:1552px;top:696px;width:202px;height:42px;background:#cce3fa;border-radius:8px"></div>
<div class="t" style="left:1562.98px;top:706.53px;font-size:23px;color:#333;font-weight:400;transform:scaleX(0.8840);transform-origin:0 0;">CALENDAR-ONLY</div>
<div class="a" style="left:2172px;top:686px;width:78px;height:60px;border:2px solid #c4c4c4;border-radius:6px 0 0 6px;background:#fff"></div>
<div class="a" style="left:2258px;top:686px;width:76px;height:60px;border:2px solid #c4c4c4;background:#fff"></div>
<div class="a" style="left:2342px;top:686px;width:102px;height:60px;border:2px solid #c4c4c4;background:#fff"></div>
<svg style="position:absolute;left:2195.9px;top:703.5px" width="29.2" height="22.2" viewBox="0 0 29.2 22.2" ><rect x="1" y="1" width="27.2" height="20.2" rx="3" fill="none" stroke="#888" stroke-width="2"/><circle cx="9.1" cy="6.7" r="3.1" fill="#888"/><rect x="3.8" y="10.2" width="10.7" height="6.2" rx="2" fill="#888"/><rect x="16.5" y="5.5" width="9.4" height="2" rx="1" fill="#888"/><rect x="16.5" y="9.2" width="9.4" height="2" rx="1" fill="#888"/><rect x="16.5" y="12.9" width="9.4" height="2" rx="1" fill="#888"/><rect x="7.4" y="18.3" width="1.8" height="3" fill="#888"/><rect x="20.4" y="18.3" width="1.8" height="3" fill="#888"/></svg>
<svg style="position:absolute;left:2283.05px;top:701.54px" width="26.2" height="26.2" viewBox="0 0 1792 1792" ><path fill="#888" d="M1568 160q44 52 12 148t-108 172l-161 161 160 696q5 19-12 33l-128 96q-7 6-19 6-4 0-7-1-15-3-21-16l-279-508-259 259 53 194q5 17-8 31l-96 96q-9 9-23 9h-2q-15-2-24-13l-189-252-252-189q-11-7-13-23-1-13 9-25l96-97q9-9 23-9 6 0 8 1l194 53 259-259-508-279q-14-8-17-24-2-16 9-27l128-128q14-13 30-8l665 159 160-160q76-76 172-108t148 12z"/></svg>
<svg style="position:absolute;left:2368.7px;top:703.7px" width="25.4" height="19.9" viewBox="0 0 25.4 19.9" ><rect x="0" y="0.00" width="25.4" height="5.20" rx="1" fill="#888"/><rect x="18.20" y="1.51" width="5.90" height="2.18" rx="0.5" fill="#fff"/><rect x="0" y="7.35" width="25.4" height="5.20" rx="1" fill="#888"/><rect x="9.10" y="8.86" width="15.00" height="2.18" rx="0.5" fill="#fff"/><rect x="0" y="14.70" width="25.4" height="5.20" rx="1" fill="#888"/><rect x="14.40" y="16.21" width="9.70" height="2.18" rx="0.5" fill="#fff"/></svg>
<svg style="position:absolute;left:2405.5px;top:710.5px" width="15.5" height="9.5" viewBox="0 0 15.5 9.5" ><polyline points="1,1 7.75,8.5 14.5,1" fill="none" stroke="#888" stroke-width="2.1"/></svg>
<svg style="position:absolute;left:420px;top:788px" width="45" height="45" viewBox="0 0 45 45" ><g fill="none" stroke="#2b2b2b" stroke-width="2.4"><circle cx="22.2" cy="13.8" r="8.6"/><path d="M15.2,20.8 C12.5,20.2 10.5,21.5 9.6,24.5 C9,26.5 8.6,29 8.6,31.5 C8.6,35.5 10.6,37.6 14.5,37.6 L30,37.6 C33.9,37.6 35.9,35.5 35.9,31.5 C35.9,29 35.5,26.5 34.9,24.5 C34,21.5 32,20.2 29.3,20.8"/></g></svg>
<div class="t" style="left:469.31px;top:796.59px;font-size:28px;color:#3a87c9;font-weight:400;transform:scaleX(0.9756);transform-origin:0 0;">Employee Ninety-Nine</div>
<div class="t" style="left:779.74px;top:796.59px;font-size:28px;color:#333;font-weight:400;transform:scaleX(0.9504);transform-origin:0 0;">e99@teamhub.co.za</div>
<div class="t" style="left:1208.26px;top:796.59px;font-size:28px;color:#333;font-weight:400;">Default Team</div>
<div class="a" style="left:1552px;top:790px;width:140px;height:42px;background:#92ccfc;border-radius:8px"></div>
<div class="t" style="left:1562.41px;top:800.53px;font-size:23px;color:#fff;font-weight:400;transform:scaleX(0.8655);transform-origin:0 0;">EMPLOYEE</div>
<div class="a" style="left:2172px;top:780px;width:78px;height:60px;border:2px solid #c4c4c4;border-radius:6px 0 0 6px;background:#fff"></div>
<div class="a" style="left:2258px;top:780px;width:76px;height:60px;border:2px solid #c4c4c4;background:#fff"></div>
<div class="a" style="left:2342px;top:780px;width:102px;height:60px;border:2px solid #c4c4c4;background:#fff"></div>
<svg style="position:absolute;left:2195.9px;top:797.5px" width="29.2" height="22.2" viewBox="0 0 29.2 22.2" ><rect x="1" y="1" width="27.2" height="20.2" rx="3" fill="none" stroke="#888" stroke-width="2"/><circle cx="9.1" cy="6.7" r="3.1" fill="#888"/><rect x="3.8" y="10.2" width="10.7" height="6.2" rx="2" fill="#888"/><rect x="16.5" y="5.5" width="9.4" height="2" rx="1" fill="#888"/><rect x="16.5" y="9.2" width="9.4" height="2" rx="1" fill="#888"/><rect x="16.5" y="12.9" width="9.4" height="2" rx="1" fill="#888"/><rect x="7.4" y="18.3" width="1.8" height="3" fill="#888"/><rect x="20.4" y="18.3" width="1.8" height="3" fill="#888"/></svg>
<svg style="position:absolute;left:2283.05px;top:795.54px" width="26.2" height="26.2" viewBox="0 0 1792 1792" ><path fill="#888" d="M1568 160q44 52 12 148t-108 172l-161 161 160 696q5 19-12 33l-128 96q-7 6-19 6-4 0-7-1-15-3-21-16l-279-508-259 259 53 194q5 17-8 31l-96 96q-9 9-23 9h-2q-15-2-24-13l-189-252-252-189q-11-7-13-23-1-13 9-25l96-97q9-9 23-9 6 0 8 1l194 53 259-259-508-279q-14-8-17-24-2-16 9-27l128-128q14-13 30-8l665 159 160-160q76-76 172-108t148 12z"/></svg>
<svg style="position:absolute;left:2368.7px;top:797.7px" width="25.4" height="19.9" viewBox="0 0 25.4 19.9" ><rect x="0" y="0.00" width="25.4" height="5.20" rx="1" fill="#888"/><rect x="18.20" y="1.51" width="5.90" height="2.18" rx="0.5" fill="#fff"/><rect x="0" y="7.35" width="25.4" height="5.20" rx="1" fill="#888"/><rect x="9.10" y="8.86" width="15.00" height="2.18" rx="0.5" fill="#fff"/><rect x="0" y="14.70" width="25.4" height="5.20" rx="1" fill="#888"/><rect x="14.40" y="16.21" width="9.70" height="2.18" rx="0.5" fill="#fff"/></svg>
<svg style="position:absolute;left:2405.5px;top:804.5px" width="15.5" height="9.5" viewBox="0 0 15.5 9.5" ><polyline points="1,1 7.75,8.5 14.5,1" fill="none" stroke="#888" stroke-width="2.1"/></svg>
<svg style="position:absolute;left:420px;top:882px" width="45" height="45" viewBox="0 0 45 45" ><g fill="none" stroke="#2b2b2b" stroke-width="2.4"><circle cx="22.2" cy="13.8" r="8.6"/><path d="M15.2,20.8 C12.5,20.2 10.5,21.5 9.6,24.5 C9,26.5 8.6,29 8.6,31.5 C8.6,35.5 10.6,37.6 14.5,37.6 L30,37.6 C33.9,37.6 35.9,35.5 35.9,31.5 C35.9,29 35.5,26.5 34.9,24.5 C34,21.5 32,20.2 29.3,20.8"/></g></svg>
<div class="t" style="left:469.35px;top:890.59px;font-size:28px;color:#3a87c9;font-weight:400;transform:scaleX(0.9606);transform-origin:0 0;">Employee One</div>
<div class="t" style="left:779.73px;top:890.59px;font-size:28px;color:#333;font-weight:400;transform:scaleX(0.9516);transform-origin:0 0;">e1@teamhub.co.za</div>
<div class="t" style="left:1209.96px;top:890.59px;font-size:28px;color:#333;font-weight:400;transform:scaleX(0.9718);transform-origin:0 0;">Team One</div>
<div class="a" style="left:1552px;top:884px;width:140px;height:42px;background:#92ccfc;border-radius:8px"></div>
<div class="t" style="left:1562.41px;top:894.53px;font-size:23px;color:#fff;font-weight:400;transform:scaleX(0.8655);transform-origin:0 0;">EMPLOYEE</div>
<div class="t" style="left:1811.20px;top:890.59px;font-size:28px;color:#333;font-weight:400;transform:scaleX(0.9819);transform-origin:0 0;">8 months ago</div>
<div class="a" style="left:2172px;top:874px;width:78px;height:60px;border:2px solid #c4c4c4;border-radius:6px 0 0 6px;background:#fff"></div>
<div class="a" style="left:2258px;top:874px;width:76px;height:60px;border:2px solid #c4c4c4;background:#fff"></div>
<div class="a" style="left:2342px;top:874px;width:102px;height:60px;border:2px solid #c4c4c4;background:#fff"></div>
<svg style="position:absolute;left:2195.9px;top:891.5px" width="29.2" height="22.2" viewBox="0 0 29.2 22.2" ><rect x="1" y="1" width="27.2" height="20.2" rx="3" fill="none" stroke="#888" stroke-width="2"/><circle cx="9.1" cy="6.7" r="3.1" fill="#888"/><rect x="3.8" y="10.2" width="10.7" height="6.2" rx="2" fill="#888"/><rect x="16.5" y="5.5" width="9.4" height="2" rx="1" fill="#888"/><rect x="16.5" y="9.2" width="9.4" height="2" rx="1" fill="#888"/><rect x="16.5" y="12.9" width="9.4" height="2" rx="1" fill="#888"/><rect x="7.4" y="18.3" width="1.8" height="3" fill="#888"/><rect x="20.4" y="18.3" width="1.8" height="3" fill="#888"/></svg>
<svg style="position:absolute;left:2283.05px;top:889.54px" width="26.2" height="26.2" viewBox="0 0 1792 1792" ><path fill="#888" d="M1568 160q44 52 12 148t-108 172l-161 161 160 696q5 19-12 33l-128 96q-7 6-19 6-4 0-7-1-15-3-21-16l-279-508-259 259 53 194q5 17-8 31l-96 96q-9 9-23 9h-2q-15-2-24-13l-189-252-252-189q-11-7-13-23-1-13 9-25l96-97q9-9 23-9 6 0 8 1l194 53 259-259-508-279q-14-8-17-24-2-16 9-27l128-128q14-13 30-8l665 159 160-160q76-76 172-108t148 12z"/></svg>
<svg style="position:absolute;left:2368.7px;top:891.7px" width="25.4" height="19.9" viewBox="0 0 25.4 19.9" ><rect x="0" y="0.00" width="25.4" height="5.20" rx="1" fill="#888"/><rect x="18.20" y="1.51" width="5.90" height="2.18" rx="0.5" fill="#fff"/><rect x="0" y="7.35" width="25.4" height="5.20" rx="1" fill="#888"/><rect x="9.10" y="8.86" width="15.00" height="2.18" rx="0.5" fill="#fff"/><rect x="0" y="14.70" width="25.4" height="5.20" rx="1" fill="#888"/><rect x="14.40" y="16.21" width="9.70" height="2.18" rx="0.5" fill="#fff"/></svg>
<svg style="position:absolute;left:2405.5px;top:898.5px" width="15.5" height="9.5" viewBox="0 0 15.5 9.5" ><polyline points="1,1 7.75,8.5 14.5,1" fill="none" stroke="#888" stroke-width="2.1"/></svg>
<svg style="position:absolute;left:420px;top:976px" width="45" height="45" viewBox="0 0 45 45" ><g fill="none" stroke="#2b2b2b" stroke-width="2.4"><circle cx="22.2" cy="13.8" r="8.6"/><path d="M15.2,20.8 C12.5,20.2 10.5,21.5 9.6,24.5 C9,26.5 8.6,29 8.6,31.5 C8.6,35.5 10.6,37.6 14.5,37.6 L30,37.6 C33.9,37.6 35.9,35.5 35.9,31.5 C35.9,29 35.5,26.5 34.9,24.5 C34,21.5 32,20.2 29.3,20.8"/></g></svg>
<div class="t" style="left:469.35px;top:984.59px;font-size:28px;color:#3a87c9;font-weight:400;transform:scaleX(0.9605);transform-origin:0 0;">Employee Three</div>
<div class="t" style="left:779.73px;top:984.59px;font-size:28px;color:#333;font-weight:400;transform:scaleX(0.9516);transform-origin:0 0;">e3@teamhub.co.za</div>
<div class="t" style="left:1209.96px;top:984.59px;font-size:28px;color:#333;font-weight:400;transform:scaleX(0.9718);transform-origin:0 0;">Team One</div>
<div class="a" style="left:1552px;top:978px;width:140px;height:42px;background:#92ccfc;border-radius:8px"></div>
<div class="t" style="left:1562.41px;top:988.53px;font-size:23px;color:#fff;font-weight:400;transform:scaleX(0.8655);transform-origin:0 0;">EMPLOYEE</div>
<div class="a" style="left:2172px;top:968px;width:78px;height:60px;border:2px solid #c4c4c4;border-radius:6px 0 0 6px;background:#fff"></div>
<div class="a" style="left:2258px;top:968px;width:76px;height:60px;border:2px solid #c4c4c4;background:#fff"></div>
<div class="a" style="left:2342px;top:968px;width:102px;height:60px;border:2px solid #c4c4c4;background:#fff"></div>
<svg style="position:absolute;left:2195.9px;top:985.5px" width="29.2" height="22.2" viewBox="0 0 29.2 22.2" ><rect x="1" y="1" width="27.2" height="20.2" rx="3" fill="none" stroke="#888" stroke-width="2"/><circle cx="9.1" cy="6.7" r="3.1" fill="#888"/><rect x="3.8" y="10.2" width="10.7" height="6.2" rx="2" fill="#888"/><rect x="16.5" y="5.5" width="9.4" height="2" rx="1" fill="#888"/><rect x="16.5" y="9.2" width="9.4" height="2" rx="1" fill="#888"/><rect x="16.5" y="12.9" width="9.4" height="2" rx="1" fill="#888"/><rect x="7.4" y="18.3" width="1.8" height="3" fill="#888"/><rect x="20.4" y="18.3" width="1.8" height="3" fill="#888"/></svg>
<svg style="position:absolute;left:2283.05px;top:983.54px" width="26.2" height="26.2" viewBox="0 0 1792 1792" ><path fill="#888" d="M1568 160q44 52 12 148t-108 172l-161 161 160 696q5 19-12 33l-128 96q-7 6-19 6-4 0-7-1-15-3-21-16l-279-508-259 259 53 194q5 17-8 31l-96 96q-9 9-23 9h-2q-15-2-24-13l-189-252-252-189q-11-7-13-23-1-13 9-25l96-97q9-9 23-9 6 0 8 1l194 53 259-259-508-279q-14-8-17-24-2-16 9-27l128-128q14-13 30-8l665 159 160-160q76-76 172-108t148 12z"/></svg>
<svg style="position:absolute;left:2368.7px;top:985.7px" width="25.4" height="19.9" viewBox="0 0 25.4 19.9" ><rect x="0" y="0.00" width="25.4" height="5.20" rx="1" fill="#888"/><rect x="18.20" y="1.51" width="5.90" height="2.18" rx="0.5" fill="#fff"/><rect x="0" y="7.35" width="25.4" height="5.20" rx="1" fill="#888"/><rect x="9.10" y="8.86" width="15.00" height="2.18" rx="0.5" fill="#fff"/><rect x="0" y="14.70" width="25.4" height="5.20" rx="1" fill="#888"/><rect x="14.40" y="16.21" width="9.70" height="2.18" rx="0.5" fill="#fff"/></svg>
<svg style="position:absolute;left:2405.5px;top:992.5px" width="15.5" height="9.5" viewBox="0 0 15.5 9.5" ><polyline points="1,1 7.75,8.5 14.5,1" fill="none" stroke="#888" stroke-width="2.1"/></svg>
<svg style="position:absolute;left:420px;top:1070px" width="45" height="45" viewBox="0 0 45 45" ><g fill="none" stroke="#2b2b2b" stroke-width="2.4"><circle cx="22.2" cy="13.8" r="8.6"/><path d="M15.2,20.8 C12.5,20.2 10.5,21.5 9.6,24.5 C9,26.5 8.6,29 8.6,31.5 C8.6,35.5 10.6,37.6 14.5,37.6 L30,37.6 C33.9,37.6 35.9,35.5 35.9,31.5 C35.9,29 35.5,26.5 34.9,24.5 C34,21.5 32,20.2 29.3,20.8"/></g></svg>
<div class="t" style="left:469.33px;top:1078.59px;font-size:28px;color:#3a87c9;font-weight:400;transform:scaleX(0.9668);transform-origin:0 0;">Employee Two</div>
<div class="t" style="left:779.73px;top:1078.59px;font-size:28px;color:#333;font-weight:400;transform:scaleX(0.9516);transform-origin:0 0;">e2@teamhub.co.za</div>
<div class="t" style="left:1209.96px;top:1078.59px;font-size:28px;color:#333;font-weight:400;transform:scaleX(0.9708);transform-origin:0 0;">Team Three</div>
<div class="a" style="left:1552px;top:1072px;width:140px;height:42px;background:#92ccfc;border-radius:8px"></div>
<div class="t" style="left:1562.41px;top:1082.53px;font-size:23px;color:#fff;font-weight:400;transform:scaleX(0.8655);transform-origin:0 0;">EMPLOYEE</div>
<div class="t" style="left:1811.23px;top:1078.59px;font-size:28px;color:#333;font-weight:400;transform:scaleX(0.9533);transform-origin:0 0;">a year ago</div>
<div class="a" style="left:2172px;top:1062px;width:78px;height:60px;border:2px solid #c4c4c4;border-radius:6px 0 0 6px;background:#fff"></div>
<div class="a" style="left:2258px;top:1062px;width:76px;height:60px;border:2px solid #c4c4c4;background:#fff"></div>
<div class="a" style="left:2342px;top:1062px;width:102px;height:60px;border:2px solid #c4c4c4;background:#fff"></div>
<svg style="position:absolute;left:2195.9px;top:1079.5px" width="29.2" height="22.2" viewBox="0 0 29.2 22.2" ><rect x="1" y="1" width="27.2" height="20.2" rx="3" fill="none" stroke="#888" stroke-width="2"/><circle cx="9.1" cy="6.7" r="3.1" fill="#888"/><rect x="3.8" y="10.2" width="10.7" height="6.2" rx="2" fill="#888"/><rect x="16.5" y="5.5" width="9.4" height="2" rx="1" fill="#888"/><rect x="16.5" y="9.2" width="9.4" height="2" rx="1" fill="#888"/><rect x="16.5" y="12.9" width="9.4" height="2" rx="1" fill="#888"/><rect x="7.4" y="18.3" width="1.8" height="3" fill="#888"/><rect x="20.4" y="18.3" width="1.8" height="3" fill="#888"/></svg>
<svg style="position:absolute;left:2283.05px;top:1077.54px" width="26.2" height="26.2" viewBox="0 0 1792 1792" ><path fill="#888" d="M1568 160q44 52 12 148t-108 172l-161 161 160 696q5 19-12 33l-128 96q-7 6-19 6-4 0-7-1-15-3-21-16l-279-508-259 259 53 194q5 17-8 31l-96 96q-9 9-23 9h-2q-15-2-24-13l-189-252-252-189q-11-7-13-23-1-13 9-25l96-97q9-9 23-9 6 0 8 1l194 53 259-259-508-279q-14-8-17-24-2-16 9-27l128-128q14-13 30-8l665 159 160-160q76-76 172-108t148 12z"/></svg>
<svg style="position:absolute;left:2368.7px;top:1079.7px" width="25.4" height="19.9" viewBox="0 0 25.4 19.9" ><rect x="0" y="0.00" width="25.4" height="5.20" rx="1" fill="#888"/><rect x="18.20" y="1.51" width="5.90" height="2.18" rx="0.5" fill="#fff"/><rect x="0" y="7.35" width="25.4" height="5.20" rx="1" fill="#888"/><rect x="9.10" y="8.86" width="15.00" height="2.18" rx="0.5" fill="#fff"/><rect x="0" y="14.70" width="25.4" height="5.20" rx="1" fill="#888"/><rect x="14.40" y="16.21" width="9.70" height="2.18" rx="0.5" fill="#fff"/></svg>
<svg style="position:absolute;left:2405.5px;top:1086.5px" width="15.5" height="9.5" viewBox="0 0 15.5 9.5" ><polyline points="1,1 7.75,8.5 14.5,1" fill="none" stroke="#888" stroke-width="2.1"/></svg>
<svg style="position:absolute;left:420px;top:1164px" width="45" height="45" viewBox="0 0 45 45" ><g fill="none" stroke="#2b2b2b" stroke-width="2.4"><circle cx="22.2" cy="13.8" r="8.6"/><path d="M15.2,20.8 C12.5,20.2 10.5,21.5 9.6,24.5 C9,26.5 8.6,29 8.6,31.5 C8.6,35.5 10.6,37.6 14.5,37.6 L30,37.6 C33.9,37.6 35.9,35.5 35.9,31.5 C35.9,29 35.5,26.5 34.9,24.5 C34,21.5 32,20.2 29.3,20.8"/></g></svg>
<div class="t" style="left:469.13px;top:1172.59px;font-size:28px;color:#3a87c9;font-weight:400;transform:scaleX(0.9613);transform-origin:0 0;">John Scarborough</div>
<div class="t" style="left:780.41px;top:1172.59px;font-size:28px;color:#333;font-weight:400;transform:scaleX(0.9625);transform-origin:0 0;">john@teamhub.co.za</div>
<div class="t" style="left:1209.96px;top:1172.59px;font-size:28px;color:#333;font-weight:400;transform:scaleX(0.9708);transform-origin:0 0;">Team Three</div>
<div class="t" style="left:1407.89px;top:1172.59px;font-size:28px;color:#333;font-weight:400;transform:scaleX(0.9915);transform-origin:0 0;">Owner</div>
<div class="a" style="left:1552px;top:1166px;width:102px;height:42px;background:#f0545f;border-radius:8px"></div>
<div class="t" style="left:1564.00px;top:1176.53px;font-size:23px;color:#fff;font-weight:400;transform:scaleX(0.9469);transform-origin:0 0;">ADMIN</div>
<div class="t" style="left:1810.92px;top:1172.59px;font-size:28px;color:#333;font-weight:400;transform:scaleX(0.9823);transform-origin:0 0;">2 minutes ago</div>
<div class="a" style="left:2172px;top:1156px;width:78px;height:60px;border:2px solid #c4c4c4;border-radius:6px 0 0 6px;background:#fff"></div>
<div class="a" style="left:2258px;top:1156px;width:76px;height:60px;border:2px solid #c4c4c4;background:#fff"></div>
<div class="a" style="left:2342px;top:1156px;width:102px;height:60px;border:2px solid #c4c4c4;background:#fff"></div>
<svg style="position:absolute;left:2195.9px;top:1173.5px" width="29.2" height="22.2" viewBox="0 0 29.2 22.2" ><rect x="1" y="1" width="27.2" height="20.2" rx="3" fill="none" stroke="#888" stroke-width="2"/><circle cx="9.1" cy="6.7" r="3.1" fill="#888"/><rect x="3.8" y="10.2" width="10.7" height="6.2" rx="2" fill="#888"/><rect x="16.5" y="5.5" width="9.4" height="2" rx="1" fill="#888"/><rect x="16.5" y="9.2" width="9.4" height="2" rx="1" fill="#888"/><rect x="16.5" y="12.9" width="9.4" height="2" rx="1" fill="#888"/><rect x="7.4" y="18.3" width="1.8" height="3" fill="#888"/><rect x="20.4" y="18.3" width="1.8" height="3" fill="#888"/></svg>
<svg style="position:absolute;left:2283.05px;top:1171.54px" width="26.2" height="26.2" viewBox="0 0 1792 1792" ><path fill="#888" d="M1568 160q44 52 12 148t-108 172l-161 161 160 696q5 19-12 33l-128 96q-7 6-19 6-4 0-7-1-15-3-21-16l-279-508-259 259 53 194q5 17-8 31l-96 96q-9 9-23 9h-2q-15-2-24-13l-189-252-252-189q-11-7-13-23-1-13 9-25l96-97q9-9 23-9 6 0 8 1l194 53 259-259-508-279q-14-8-17-24-2-16 9-27l128-128q14-13 30-8l665 159 160-160q76-76 172-108t148 12z"/></svg>
<svg style="position:absolute;left:2368.7px;top:1173.7px" width="25.4" height="19.9" viewBox="0 0 25.4 19.9" ><rect x="0" y="0.00" width="25.4" height="5.20" rx="1" fill="#888"/><rect x="18.20" y="1.51" width="5.90" height="2.18" rx="0.5" fill="#fff"/><rect x="0" y="7.35" width="25.4" height="5.20" rx="1" fill="#888"/><rect x="9.10" y="8.86" width="15.00" height="2.18" rx="0.5" fill="#fff"/><rect x="0" y="14.70" width="25.4" height="5.20" rx="1" fill="#888"/><rect x="14.40" y="16.21" width="9.70" height="2.18" rx="0.5" fill="#fff"/></svg>
<svg style="position:absolute;left:2405.5px;top:1180.5px" width="15.5" height="9.5" viewBox="0 0 15.5 9.5" ><polyline points="1,1 7.75,8.5 14.5,1" fill="none" stroke="#888" stroke-width="2.1"/></svg>
<svg style="position:absolute;left:420px;top:1258px" width="45" height="45" viewBox="0 0 45 45" ><g fill="none" stroke="#2b2b2b" stroke-width="2.4"><circle cx="22.2" cy="13.8" r="8.6"/><path d="M15.2,20.8 C12.5,20.2 10.5,21.5 9.6,24.5 C9,26.5 8.6,29 8.6,31.5 C8.6,35.5 10.6,37.6 14.5,37.6 L30,37.6 C33.9,37.6 35.9,35.5 35.9,31.5 C35.9,29 35.5,26.5 34.9,24.5 C34,21.5 32,20.2 29.3,20.8"/></g></svg>
<div class="t" style="left:469.30px;top:1266.59px;font-size:28px;color:#3a87c9;font-weight:400;transform:scaleX(0.9812);transform-origin:0 0;">Manager One</div>
<div class="t" style="left:779.18px;top:1266.59px;font-size:28px;color:#333;font-weight:400;transform:scaleX(0.9622);transform-origin:0 0;">m1@teamhub.co.za</div>
<div class="t" style="left:1209.96px;top:1266.59px;font-size:28px;color:#333;font-weight:400;transform:scaleX(0.9708);transform-origin:0 0;">Team Three</div>
<div class="a" style="left:1552px;top:1260px;width:224px;height:42px;background:#f2705c;border-radius:8px"></div>
<div class="t" style="left:1564.00px;top:1270.53px;font-size:23px;color:#fff;font-weight:400;transform:scaleX(0.9024);transform-origin:0 0;">ADMIN-READ-ONLY</div>
<div class="t" style="left:1810.92px;top:1266.59px;font-size:28px;color:#333;font-weight:400;transform:scaleX(0.9835);transform-origin:0 0;">6 months ago</div>
<div class="a" style="left:2172px;top:1250px;width:78px;height:60px;border:2px solid #c4c4c4;border-radius:6px 0 0 6px;background:#fff"></div>
<div class="a" style="left:2258px;top:1250px;width:76px;height:60px;border:2px solid #c4c4c4;background:#fff"></div>
<div class="a" style="left:2342px;top:1250px;width:102px;height:60px;border:2px solid #c4c4c4;background:#fff"></div>
<svg style="position:absolute;left:2195.9px;top:1267.5px" width="29.2" height="22.2" viewBox="0 0 29.2 22.2" ><rect x="1" y="1" width="27.2" height="20.2" rx="3" fill="none" stroke="#888" stroke-width="2"/><circle cx="9.1" cy="6.7" r="3.1" fill="#888"/><rect x="3.8" y="10.2" width="10.7" height="6.2" rx="2" fill="#888"/><rect x="16.5" y="5.5" width="9.4" height="2" rx="1" fill="#888"/><rect x="16.5" y="9.2" width="9.4" height="2" rx="1" fill="#888"/><rect x="16.5" y="12.9" width="9.4" height="2" rx="1" fill="#888"/><rect x="7.4" y="18.3" width="1.8" height="3" fill="#888"/><rect x="20.4" y="18.3" width="1.8" height="3" fill="#888"/></svg>
<svg style="position:absolute;left:2283.05px;top:1265.54px" width="26.2" height="26.2" viewBox="0 0 1792 1792" ><path fill="#888" d="M1568 160q44 52 12 148t-108 172l-161 161 160 696q5 19-12 33l-128 96q-7 6-19 6-4 0-7-1-15-3-21-16l-279-508-259 259 53 194q5 17-8 31l-96 96q-9 9-23 9h-2q-15-2-24-13l-189-252-252-189q-11-7-13-23-1-13 9-25l96-97q9-9 23-9 6 0 8 1l194 53 259-259-508-279q-14-8-17-24-2-16 9-27l128-128q14-13 30-8l665 159 160-160q76-76 172-108t148 12z"/></svg>
<svg style="position:absolute;left:2368.7px;top:1267.7px" width="25.4" height="19.9" viewBox="0 0 25.4 19.9" ><rect x="0" y="0.00" width="25.4" height="5.20" rx="1" fill="#888"/><rect x="18.20" y="1.51" width="5.90" height="2.18" rx="0.5" fill="#fff"/><rect x="0" y="7.35" width="25.4" height="5.20" rx="1" fill="#888"/><rect x="9.10" y="8.86" width="15.00" height="2.18" rx="0.5" fill="#fff"/><rect x="0" y="14.70" width="25.4" height="5.20" rx="1" fill="#888"/><rect x="14.40" y="16.21" width="9.70" height="2.18" rx="0.5" fill="#fff"/></svg>
<svg style="position:absolute;left:2405.5px;top:1274.5px" width="15.5" height="9.5" viewBox="0 0 15.5 9.5" ><polyline points="1,1 7.75,8.5 14.5,1" fill="none" stroke="#888" stroke-width="2.1"/></svg>
<svg style="position:absolute;left:420px;top:1352px" width="45" height="45" viewBox="0 0 45 45" ><g fill="none" stroke="#2b2b2b" stroke-width="2.4"><circle cx="22.2" cy="13.8" r="8.6"/><path d="M15.2,20.8 C12.5,20.2 10.5,21.5 9.6,24.5 C9,26.5 8.6,29 8.6,31.5 C8.6,35.5 10.6,37.6 14.5,37.6 L30,37.6 C33.9,37.6 35.9,35.5 35.9,31.5 C35.9,29 35.5,26.5 34.9,24.5 C34,21.5 32,20.2 29.3,20.8"/></g></svg>
<div class="t" style="left:469.30px;top:1360.59px;font-size:28px;color:#3a87c9;font-weight:400;transform:scaleX(0.9820);transform-origin:0 0;">Manager Two</div>
<div class="t" style="left:779.19px;top:1360.59px;font-size:28px;color:#333;font-weight:400;transform:scaleX(0.9610);transform-origin:0 0;">m2@teamhub.co.za</div>
<div class="t" style="left:1209.96px;top:1360.59px;font-size:28px;color:#333;font-weight:400;transform:scaleX(0.9708);transform-origin:0 0;">Team Three</div>
<div class="a" style="left:1552px;top:1354px;width:140px;height:42px;background:#4289c8;border-radius:8px"></div>
<div class="t" style="left:1563.60px;top:1364.53px;font-size:23px;color:#fff;font-weight:400;transform:scaleX(0.8756);transform-origin:0 0;">TEAMLEAD</div>
<div class="a" style="left:2172px;top:1344px;width:78px;height:60px;border:2px solid #c4c4c4;border-radius:6px 0 0 6px;background:#fff"></div>
<div class="a" style="left:2258px;top:1344px;width:76px;height:60px;border:2px solid #c4c4c4;background:#fff"></div>
<div class="a" style="left:2342px;top:1344px;width:102px;height:60px;border:2px solid #c4c4c4;background:#fff"></div>
<svg style="position:absolute;left:2195.9px;top:1361.5px" width="29.2" height="22.2" viewBox="0 0 29.2 22.2" ><rect x="1" y="1" width="27.2" height="20.2" rx="3" fill="none" stroke="#888" stroke-width="2"/><circle cx="9.1" cy="6.7" r="3.1" fill="#888"/><rect x="3.8" y="10.2" width="10.7" height="6.2" rx="2" fill="#888"/><rect x="16.5" y="5.5" width="9.4" height="2" rx="1" fill="#888"/><rect x="16.5" y="9.2" width="9.4" height="2" rx="1" fill="#888"/><rect x="16.5" y="12.9" width="9.4" height="2" rx="1" fill="#888"/><rect x="7.4" y="18.3" width="1.8" height="3" fill="#888"/><rect x="20.4" y="18.3" width="1.8" height="3" fill="#888"/></svg>
<svg style="position:absolute;left:2283.05px;top:1359.54px" width="26.2" height="26.2" viewBox="0 0 1792 1792" ><path fill="#888" d="M1568 160q44 52 12 148t-108 172l-161 161 160 696q5 19-12 33l-128 96q-7 6-19 6-4 0-7-1-15-3-21-16l-279-508-259 259 53 194q5 17-8 31l-96 96q-9 9-23 9h-2q-15-2-24-13l-189-252-252-189q-11-7-13-23-1-13 9-25l96-97q9-9 23-9 6 0 8 1l194 53 259-259-508-279q-14-8-17-24-2-16 9-27l128-128q14-13 30-8l665 159 160-160q76-76 172-108t148 12z"/></svg>
<svg style="position:absolute;left:2368.7px;top:1361.7px" width="25.4" height="19.9" viewBox="0 0 25.4 19.9" ><rect x="0" y="0.00" width="25.4" height="5.20" rx="1" fill="#888"/><rect x="18.20" y="1.51" width="5.90" height="2.18" rx="0.5" fill="#fff"/><rect x="0" y="7.35" width="25.4" height="5.20" rx="1" fill="#888"/><rect x="9.10" y="8.86" width="15.00" height="2.18" rx="0.5" fill="#fff"/><rect x="0" y="14.70" width="25.4" height="5.20" rx="1" fill="#888"/><rect x="14.40" y="16.21" width="9.70" height="2.18" rx="0.5" fill="#fff"/></svg>
<svg style="position:absolute;left:2405.5px;top:1368.5px" width="15.5" height="9.5" viewBox="0 0 15.5 9.5" ><polyline points="1,1 7.75,8.5 14.5,1" fill="none" stroke="#888" stroke-width="2.1"/></svg>
<svg style="position:absolute;left:420px;top:1446px" width="45" height="45" viewBox="0 0 45 45" ><g fill="none" stroke="#2b2b2b" stroke-width="2.4"><circle cx="22.2" cy="13.8" r="8.6"/><path d="M15.2,20.8 C12.5,20.2 10.5,21.5 9.6,24.5 C9,26.5 8.6,29 8.6,31.5 C8.6,35.5 10.6,37.6 14.5,37.6 L30,37.6 C33.9,37.6 35.9,35.5 35.9,31.5 C35.9,29 35.5,26.5 34.9,24.5 C34,21.5 32,20.2 29.3,20.8"/></g></svg>
<div class="t" style="left:471.50px;top:1454.59px;font-size:28px;color:#3a87c9;font-weight:400;transform:scaleX(0.9703);transform-origin:0 0;">Virtual Employee</div>
<div class="t" style="left:779.72px;top:1454.59px;font-size:28px;color:#333;font-weight:400;transform:scaleX(0.9671);transform-origin:0 0;">8801111234567@teamhub.co.za</div>
<div class="t" style="left:1208.26px;top:1454.59px;font-size:28px;color:#333;font-weight:400;">Default Team</div>
<div class="a" style="left:1552px;top:1448px;width:116px;height:42px;background:#fed686;border-radius:8px"></div>
<div class="t" style="left:1564.00px;top:1458.53px;font-size:23px;color:#333;font-weight:400;transform:scaleX(0.8625);transform-origin:0 0;">VIRTUAL</div>
<div class="a" style="left:2172px;top:1438px;width:78px;height:60px;border:2px solid #c4c4c4;border-radius:6px 0 0 6px;background:#fff"></div>
<div class="a" style="left:2258px;top:1438px;width:76px;height:60px;border:2px solid #c4c4c4;background:#fff"></div>
<div class="a" style="left:2342px;top:1438px;width:102px;height:60px;border:2px solid #c4c4c4;background:#fff"></div>
<svg style="position:absolute;left:2195.9px;top:1455.5px" width="29.2" height="22.2" viewBox="0 0 29.2 22.2" ><rect x="1" y="1" width="27.2" height="20.2" rx="3" fill="none" stroke="#888" stroke-width="2"/><circle cx="9.1" cy="6.7" r="3.1" fill="#888"/><rect x="3.8" y="10.2" width="10.7" height="6.2" rx="2" fill="#888"/><rect x="16.5" y="5.5" width="9.4" height="2" rx="1" fill="#888"/><rect x="16.5" y="9.2" width="9.4" height="2" rx="1" fill="#888"/><rect x="16.5" y="12.9" width="9.4" height="2" rx="1" fill="#888"/><rect x="7.4" y="18.3" width="1.8" height="3" fill="#888"/><rect x="20.4" y="18.3" width="1.8" height="3" fill="#888"/></svg>
<svg style="position:absolute;left:2283.05px;top:1453.54px" width="26.2" height="26.2" viewBox="0 0 1792 1792" ><path fill="#888" d="M1568 160q44 52 12 148t-108 172l-161 161 160 696q5 19-12 33l-128 96q-7 6-19 6-4 0-7-1-15-3-21-16l-279-508-259 259 53 194q5 17-8 31l-96 96q-9 9-23 9h-2q-15-2-24-13l-189-252-252-189q-11-7-13-23-1-13 9-25l96-97q9-9 23-9 6 0 8 1l194 53 259-259-508-279q-14-8-17-24-2-16 9-27l128-128q14-13 30-8l665 159 160-160q76-76 172-108t148 12z"/></svg>
<svg style="position:absolute;left:2368.7px;top:1455.7px" width="25.4" height="19.9" viewBox="0 0 25.4 19.9" ><rect x="0" y="0.00" width="25.4" height="5.20" rx="1" fill="#888"/><rect x="18.20" y="1.51" width="5.90" height="2.18" rx="0.5" fill="#fff"/><rect x="0" y="7.35" width="25.4" height="5.20" rx="1" fill="#888"/><rect x="9.10" y="8.86" width="15.00" height="2.18" rx="0.5" fill="#fff"/><rect x="0" y="14.70" width="25.4" height="5.20" rx="1" fill="#888"/><rect x="14.40" y="16.21" width="9.70" height="2.18" rx="0.5" fill="#fff"/></svg>
<svg style="position:absolute;left:2405.5px;top:1462.5px" width="15.5" height="9.5" viewBox="0 0 15.5 9.5" ><polyline points="1,1 7.75,8.5 14.5,1" fill="none" stroke="#888" stroke-width="2.1"/></svg>
<svg style="position:absolute;left:0;top:0" width="2560" height="1600"><ellipse cx="2350.3" cy="367.8" rx="182.3" ry="91" fill="none" stroke="#ff2200" stroke-width="37"/></svg>
<div class="a" style="left:0;top:1598px;width:2536px;height:2px;background:#2f2f2f"></div></body></html>
